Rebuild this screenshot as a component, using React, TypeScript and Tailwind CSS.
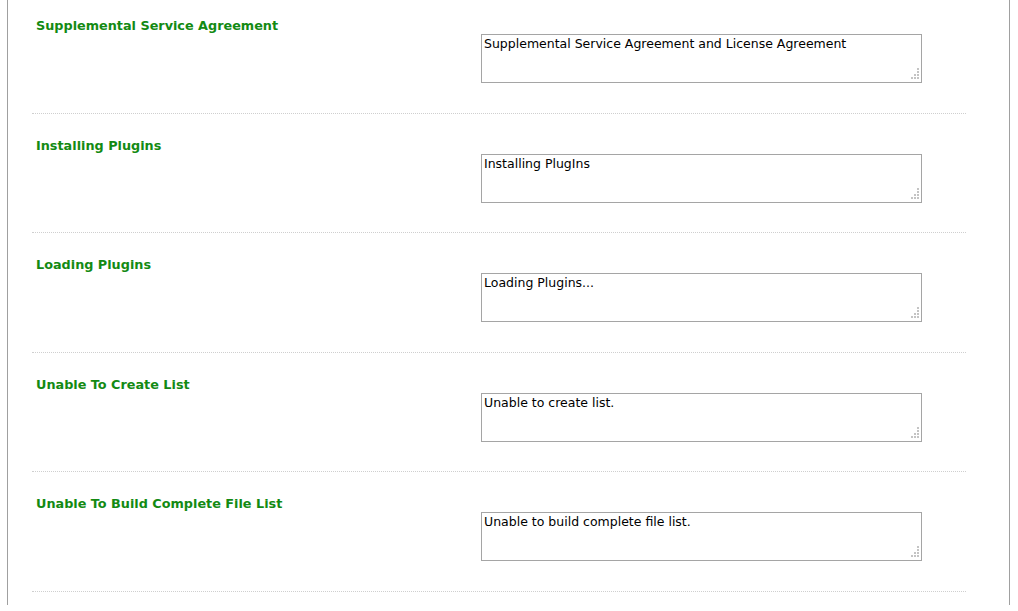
const rows = [
  { label: "Supplemental Service Agreement", value: "Supplemental Service Agreement and License Agreement" },
  { label: "Installing Plugins", value: "Installing PlugIns" },
  { label: "Loading Plugins", value: "Loading Plugins..." },
  { label: "Unable To Create List", value: "Unable to create list." },
  { label: "Unable To Build Complete File List", value: "Unable to build complete file list." },
];

function Grip() {
  // the little dotted resize corner in the bottom-right of each box
  const dots = [
    [6, 0],
    [6, 3],
    [6, 6], [3, 6],
    [6, 9], [3, 9], [0, 9],
  ];
  return (
    <svg width="8" height="11" className="absolute right-[2px] bottom-[3px]">
      {dots.map(([x, y], i) => (
        <rect key={i} x={x} y={y} width="2" height="2" fill="#c4c4c4" />
      ))}
    </svg>
  );
}

export default function App() {
  return (
    <div className="h-[611px] w-[1018px] overflow-hidden bg-white font-['DejaVu_Sans',sans-serif]">
      <div className="ml-[7px] h-full w-[1003px] border-x border-[#a0a0a0] pl-[24px]">
        <div className="-mt-[6px] w-[934px]">
          {rows.map((r) => (
            <div key={r.label} className="flex h-[119.5px] items-start border-b border-dotted border-[#cfcfcf]">
              <div className="w-[449px] pl-[4px] pt-[24px] text-[12.8px] font-bold leading-[16px] text-[#138a13]">
                {r.label}
              </div>
              <div className="relative mt-[40px] h-[49px] w-[441px] border border-[#a5a5a5] px-[2px] pt-[1px] text-[12.5px] leading-[16px] text-black">
                {r.value}
                <Grip />
              </div>
            </div>
          ))}
        </div>
      </div>
    </div>
  );
}
